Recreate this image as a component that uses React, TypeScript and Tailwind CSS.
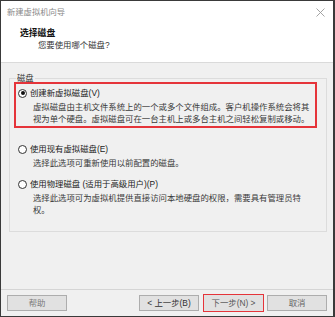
import React from 'react';

const font = { fontFamily: '"Liberation Sans", "Noto Sans CJK SC", sans-serif' };

function Radio({ checked = false }: { checked?: boolean }) {
    return (
        <span className="w-[9px] h-[9px] rounded-full border border-[#333] bg-white flex items-center justify-center shrink-0">
            {checked && <span className="w-[4px] h-[4px] rounded-full bg-[#111]"></span>}
        </span>
    );
}

function Option({ label, checked, lines }: { label: string; checked?: boolean; lines: string[] }) {
    return (
        <div>
            <div className="flex items-center h-[12px] gap-[3px]">
                <Radio checked={checked} />
                <span className="text-[8.4px] leading-[12px] text-[#222] whitespace-nowrap">{label}</span>
            </div>
            <div className="mt-[2px] ml-[15px] text-[8.4px] leading-[12px] text-[#3a3a3a]">
                {lines.map((l) => (
                    <div key={l} className="whitespace-nowrap">{l}</div>
                ))}
            </div>
        </div>
    );
}

function Button({ children, color = '#333' }: { children: React.ReactNode; color?: string }) {
    return (
        <div
            className="w-[60px] h-[16px] bg-[#e1e1e1] border border-[#adadad] flex items-center justify-center text-[8.4px] whitespace-nowrap"
            style={{ color }}
        >
            {children}
        </div>
    );
}

export default function App() {
    return (
        <div className="w-[335px] h-[317px] border border-[#3a3a3a] border-r-2 flex flex-col bg-[#f0f0f0]" style={font}>
            {/* Header */}
            <div className="h-[62px] bg-white border-b border-[#dadada] shrink-0">
                <div className="h-[22px] flex items-center justify-between pl-[6px] pr-[8px]">
                    <span className="text-[8.3px] text-[#8a8a8a]">新建虚拟机向导</span>
                    <svg width="9" height="9" viewBox="0 0 9 9" className="mt-[1px]">
                        <path d="M0.5 0.5 L8.5 8.5 M8.5 0.5 L0.5 8.5" stroke="#9a9a9a" strokeWidth="0.9" />
                    </svg>
                </div>
                <div className="mt-[4px] pl-[19px] text-[8.8px] leading-[12px] font-bold text-[#111]">选择磁盘</div>
                <div className="pl-[37px] text-[8.4px] leading-[12px] text-[#333]">您要使用哪个磁盘?</div>
            </div>

            {/* Body */}
            <div className="flex-1">
                <fieldset className="mt-[11px] ml-[8px] w-[318px] border border-[#dcdcdc] pl-[4px] pr-[9px] pb-[15px]">
                    <legend className="ml-[2px] px-[1px] text-[8.4px] leading-[8px] text-[#333]">磁盘</legend>
                    <div className="border-2 border-[#e5343a] px-[2px] pt-[3px] pb-[1px]">
                        <Option
                            checked
                            label="创建新虚拟磁盘(V)"
                            lines={[
                                '虚拟磁盘由主机文件系统上的一个或多个文件组成。客户机操作系统会将其',
                                '视为单个硬盘。虚拟磁盘可在一台主机上或多台主机之间轻松复制或移动。',
                            ]}
                        />
                    </div>
                    <div className="px-[4px] mt-[15px]">
                        <Option label="使用现有虚拟磁盘(E)" lines={['选择此选项可重新使用以前配置的磁盘。']} />
                    </div>
                    <div className="px-[4px] mt-[9px]">
                        <Option
                            label="使用物理磁盘 (适用于高级用户)(P)"
                            lines={['选择此选项可为虚拟机提供直接访问本地硬盘的权限，需要具有管理员特', '权。']}
                        />
                    </div>
                </fieldset>
            </div>

            {/* Footer */}
            <div className="h-[27px] border-t border-[#d5d5d5] shrink-0 flex items-start pt-[5px] pl-[6px] pr-[6px]">
                <Button color="#7a7a7a">帮助</Button>
                <div className="flex-1"></div>
                <Button color="#333">&lt; 上一步(B)</Button>
                <div className="ml-[4px] -mt-[1px] border-[1.5px] border-[#e5343a]">
                    <div className="w-[59px] h-[16px] bg-[#e1e1e1] flex items-center justify-center text-[8.4px] text-[#555] whitespace-nowrap">
                        下一步(N) &gt;
                    </div>
                </div>
                <div className="ml-[3px]">
                    <Button color="#666">取消</Button>
                </div>
            </div>
        </div>
    );
}
